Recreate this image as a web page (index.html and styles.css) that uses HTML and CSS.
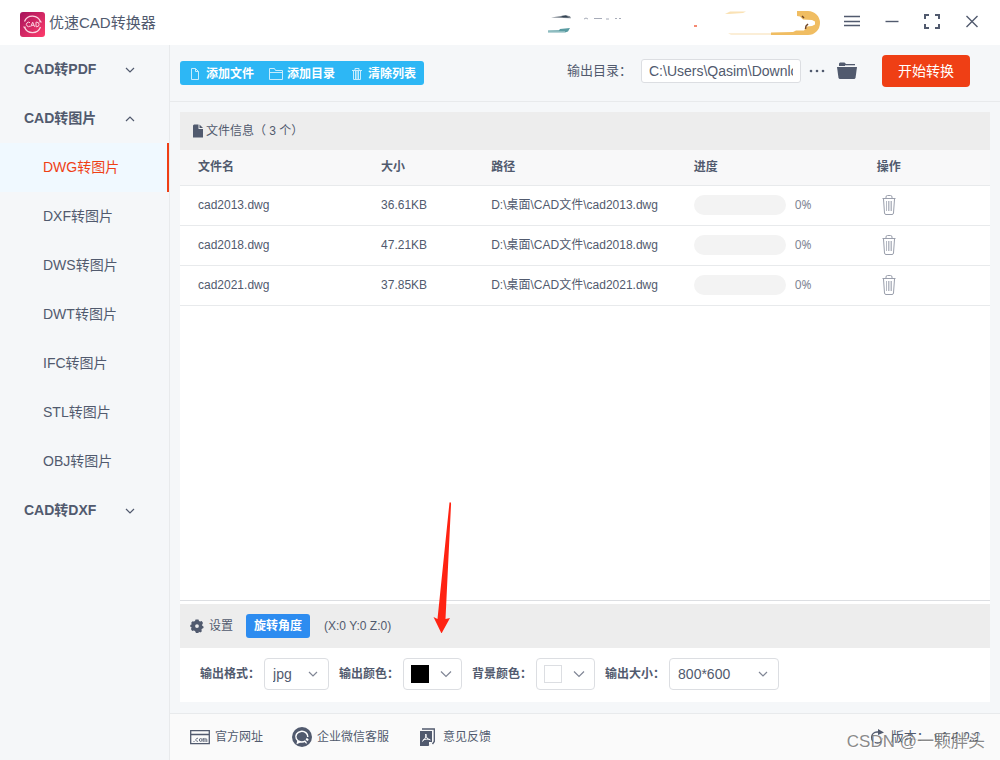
FILE: index.html
```html
<!DOCTYPE html>
<html lang="zh-CN">
<head>
<meta charset="utf-8">
<title>优速CAD转换器</title>
<link rel="stylesheet" href="styles.css">
</head>
<body>
<div class="app">
  <header class="titlebar">
    <svg class="logo" viewBox="0 0 25 25" aria-hidden="true">
      <defs><linearGradient id="lg" x1="0" y1="0" x2="1" y2="1"><stop offset="0" stop-color="#a5125c"/><stop offset="1" stop-color="#ff3d6c"/></linearGradient></defs>
      <rect width="25" height="25" rx="3" fill="url(#lg)"/>
      <path d="M4.500 9.500A8.500 8.500 0 0 1 20.500 10M20.500 15A8.500 8.500 0 0 1 4.500 15" fill="none" stroke="#fbd3e0" stroke-width="1.300"/>
      <path d="M3 14.500l3 .3-1.700 1.700zM22 10.500l-3-.3 1.700-1.700z" fill="#fbd3e0"/>
      <path d="M10 10.700a2.200 2.200 0 1 0 0 3.400M10.700 14.800l2-4.600 2 4.600M11.500 13.300h2.500M16 10.200v4.500h.8a2.200 2.200 0 0 0 0-4.500z" fill="none" stroke="#fbd3e0"/>
    </svg>
    <h1 class="title">优速CAD转换器</h1>
    <svg class="member" viewBox="0 0 280 30" aria-hidden="true">
      <path d="M11 9.500l10-1.500 5-.8 4 1 1 2-8-.3z" fill="#7d858f"/><path d="M21 8l5-.5 3 2-6-.2z" fill="#344454"/>
      <path d="M8 22.500l11-.2 1-1.300 10-.9-2 3.500-3 1H8z" fill="#5a9ca2"/><path d="M8 24h17" stroke="#c3dddf"/>
      <path d="M44 11l2-1 2 1M54 10.500h8M66 11h3M75 10.500h2M79 10.500h2" fill="none" stroke="#a6abb8"/>
      <path d="M154 17h3v2h-3z" fill="#f58a72"/>
      <path d="M185 6l5-2.500h16l-3 1.500-14 1z" fill="#fae2b5"/>
      <path d="M188 25.500h45v1h-42z" fill="#f7ddb0"/>
      <path d="M257 3h11a12 12 0 0 1 0 24h-37v-2.500l22-.5 3-1.500h8l3-4 5-.5 3-1.500v-3l-3-1.500-9-.5-3-3-3-.5z" fill="#f0bd62"/>
      <path d="M262 8l2 2M268 16l-2 2-.5 3" stroke="#704526" stroke-width="1.500" fill="none"/>
    </svg>
    <div class="window-buttons">
      <button type="button" aria-label="菜单"><svg viewBox="0 0 16 16"><path d="M0 3.500h16M0 8.500h16M0 12.500h16"/></svg></button>
      <button type="button" aria-label="最小化"><svg viewBox="0 0 16 16"><path d="M1.500 8.500h13"/></svg></button>
      <button type="button" aria-label="全屏"><svg viewBox="0 0 16 16"><path class="thick" d="M1 6V2h4M11 2h4v4M15 11v4h-4M5 15H1v-4"/></svg></button>
      <button type="button" aria-label="关闭"><svg viewBox="0 0 16 16"><path d="M2.500 3l11 11M13.500 3l-11 11"/></svg></button>
    </div>
  </header>

  <div class="body">
    <nav class="sidebar">
      <button type="button" class="group">CAD转PDF<svg viewBox="0 0 10 10"><path d="M1 3l4 4 4-4"/></svg></button>
      <button type="button" class="group" aria-expanded="true">CAD转图片<svg viewBox="0 0 10 10"><path d="M1 7l4-4 4 4"/></svg></button>
      <a href="#" class="item active">DWG转图片</a>
      <a href="#" class="item">DXF转图片</a>
      <a href="#" class="item">DWS转图片</a>
      <a href="#" class="item">DWT转图片</a>
      <a href="#" class="item">IFC转图片</a>
      <a href="#" class="item">STL转图片</a>
      <a href="#" class="item">OBJ转图片</a>
      <button type="button" class="group">CAD转DXF<svg viewBox="0 0 10 10"><path d="M1 3l4 4 4-4"/></svg></button>
    </nav>

    <main class="main">
      <div class="toolbar">
        <div class="actions">
          <button type="button"><svg viewBox="0 0 14 14"><path d="M3.500 1.500h4l3 3v8h-7zM7.500 1.500v3h3"/></svg>添加文件</button>
          <button type="button"><svg viewBox="0 0 14 14"><path d="M.5 12.500v-11h5l1 2h7v9zM.5 5.500h13"/></svg>添加目录</button>
          <button type="button"><svg viewBox="0 0 14 14"><path d="M2 3.500h10M5 3V1.500h4V3M3.500 4v8.500h7V4M5.500 4v8M7 4v8M8.500 4v8"/></svg>清除列表</button>
        </div>
        <div class="output">
          <label for="dir">输出目录：</label>
          <input id="dir" class="dir" type="text" value="C:\Users\Qasim\Downloads">
          <button type="button" class="icon-button" aria-label="选择目录"><svg class="dots" viewBox="0 0 16 16"><circle cx="2" cy="8" r="1.300"/><circle cx="8" cy="8" r="1.300"/><circle cx="14" cy="8" r="1.300"/></svg></button>
          <button type="button" class="icon-button" aria-label="打开目录"><svg class="folder" viewBox="0 0 20 18"><path d="M2 4V1.500l1-1h4.500L9 2h9v2z"/><path class="gap" d="M8 3.500h10"/><path d="M0 5h20l-1.500 11-1 1h-15l-1-1z"/></svg></button>
          <button type="button" class="start">开始转换</button>
        </div>
      </div>

      <div class="content">
        <section class="files">
          <h2 class="bar file-bar"><svg viewBox="0 0 10 14"><path d="M0 1.500L1 .5h4.500V5H10v8.500H0z"/><path d="M6.500.5L10 4H6.500z"/></svg><span>文件信息（ 3 个）</span></h2>
          <table>
            <colgroup><col class="c-name"><col class="c-size"><col class="c-path"><col class="c-progress"><col></colgroup>
            <thead><tr><th>文件名</th><th>大小</th><th>路径</th><th>进度</th><th>操作</th></tr></thead>
            <tbody>
              <tr><td>cad2013.dwg</td><td>36.61KB</td><td>D:\桌面\CAD文件\cad2013.dwg</td><td><div class="progress"><span class="track"></span><span>0%</span></div></td><td><button type="button" class="trash" aria-label="删除"><svg viewBox="0 0 14 20"><use href="#bin"/></svg></button></td></tr>
              <tr><td>cad2018.dwg</td><td>47.21KB</td><td>D:\桌面\CAD文件\cad2018.dwg</td><td><div class="progress"><span class="track"></span><span>0%</span></div></td><td><button type="button" class="trash" aria-label="删除"><svg viewBox="0 0 14 20"><use href="#bin"/></svg></button></td></tr>
              <tr><td>cad2021.dwg</td><td>37.85KB</td><td>D:\桌面\CAD文件\cad2021.dwg</td><td><div class="progress"><span class="track"></span><span>0%</span></div></td><td><button type="button" class="trash" aria-label="删除"><svg viewBox="0 0 14 20"><use href="#bin"/></svg></button></td></tr>
            </tbody>
          </table>
        </section>

        <section class="settings">
          <div class="bar settings-bar">
            <svg class="gear" viewBox="0 0 14 14"><path fill-rule="evenodd" d="M5.500 0.500h3l.5 1.500 1.200.6 1.500-.5 1.300 2-.8 1.400v1.200l1.300.8v1.500l-1.500.7-.6 1.100.5 1.400-1.600 1.300-1.500-.7-.3 1.200h-2.500L5 12l-1.300-.6-1.500.5L.9 10l.8-1.400L.3 7.800V6l1.400-.7-.5-1.500L2.500 2.200l1.400.4L5 2zM7 5.200a1.900 1.900 0 1 0 0 3.800 1.900 1.900 0 0 0 0-3.800z"/></svg>
            <span>设置</span>
            <button type="button" class="rotate">旋转角度</button>
            <span class="angles">(X:0 Y:0 Z:0)</span>
          </div>
          <form class="options">
            <label for="format">输出格式：</label>
            <span class="select format"><select id="format"><option>jpg</option></select><svg viewBox="0 0 10 10"><path d="M1 3l4 4 4-4"/></svg></span>
            <label for="color">输出颜色：</label>
            <button type="button" id="color" class="select picker"><span class="swatch black"></span><svg viewBox="0 0 12 10"><path d="M1 2.500l5 5 5-5"/></svg></button>
            <label for="bg">背景颜色：</label>
            <button type="button" id="bg" class="select picker"><span class="swatch"></span><svg viewBox="0 0 12 10"><path d="M1 2.500l5 5 5-5"/></svg></button>
            <label for="size">输出大小：</label>
            <span class="select size"><select id="size"><option>800*600</option></select><svg viewBox="0 0 10 10"><path d="M1 3l4 4 4-4"/></svg></span>
          </form>
        </section>
      </div>

      <footer class="footer">
        <a href="#"><svg class="f-icon" viewBox="0 0 20 20"><path class="line" d="M.7 3.700h18.600v13H.7zM1 7.500h18"/><path class="thin" d="M3.500 14.500h1M8 11.500a1.500 1.500 0 1 0 0 2.700M9.300 13a1.400 1.400 0 1 0 2.800 0 1.400 1.400 0 1 0-2.800 0M13.200 15v-4M13.200 12.300q1-1.500 1.800 0V15M15 12.300q1-1.500 1.800 0V15"/></svg>官方网址</a>
        <a href="#"><svg class="f-icon" viewBox="0 0 20 20"><circle cx="10" cy="10" r="10"/><path class="white" d="M13.500 13.800A6 5.300 0 1 1 15.800 10M6 13.500L5.500 16l2.700-1.200"/><path class="dot" d="M14.800 10.800l2 2-1.200 1.200-2-1.200zM13 14l1.200.5 1 2.300-2-.7z"/></svg>企业微信客服</a>
        <a href="#"><svg class="f-icon" viewBox="0 0 20 20"><path d="M2 4h12v10.500L10.500 19H2z"/><path class="line" d="M4 2h12.300v12.500L14.500 17"/><path class="white fine" d="M4 14.500c3-2 4.500-5 3.800-7.500M7.800 7c0 3.500 1.500 5 4.700 6M5 13c2.500-1 5-1 7-.5"/><path class="dot" d="M11 15h3l-3 3.500z"/></svg>意见反馈</a>
        <span class="version"><svg viewBox="0 0 16 16"><path class="line" d="M11 3H8a5.500 5.500 0 1 0 5.500 6.500"/><path d="M9 0l6 3.500L9 6z"/></svg><span>版本：</span><em>v1.4.0.2</em></span>
      </footer>
    </main>
  </div>

  <svg class="arrow" viewBox="0 0 20 132" aria-hidden="true"><path d="M17.500 1.500Q19.500.5 19 4L13.500 118l4.500-1-8.500 15.500L1.500 116l4 2z"/></svg>
  <div class="watermark">CSDN @一颗胖头</div>
</div>
<svg class="defs" aria-hidden="true"><symbol id="bin" viewBox="0 0 14 20"><path d="M.5 3.500h13M4 3.500V2q0-1.500 1.500-1.500h3Q10 .5 10 2v1.500M1.500 4l1 14q.1 1.500 1.500 1.500h6q1.400 0 1.500-1.500l1-14"/><path class="ribs" d="M4.500 6v10M6.500 6v10M8 6v10M9.500 6v10"/></symbol></svg>
</body>
</html>
```

FILE: styles.css
```css
* { box-sizing: border-box; }
body {
  margin: 0;
  color: #515a6e;
  background: #f5f7f9;
  font: 12px/20px "Liberation Sans", "Noto Sans CJK SC", sans-serif;
}
button, input, select { font: inherit; color: inherit; }
button { padding: 0; border: 0; background: none; }
a { color: inherit; text-decoration: none; }
svg { display: block; flex: none; fill: #515a6e; }
.defs { position: absolute; width: 0; height: 0; }
.app { position: relative; display: flex; flex-direction: column; min-height: 100vh; }

.titlebar { display: flex; align-items: center; height: 45px; padding: 0 20px; background: #fff; }
.logo { width: 25px; height: 25px; margin-top: 3px; }
.title { margin: 0 0 0 4px; font-size: 15px; font-weight: 400; }
.member { width: 280px; height: 30px; margin-left: auto; }
.window-buttons { display: flex; gap: 24px; margin-left: 24px; padding-bottom: 4px; }
.window-buttons svg { width: 16px; height: 16px; fill: none; stroke: #515a6e; stroke-width: 1.4; }
.window-buttons .thick { stroke-width: 2; }

.body { display: flex; flex: 1; }
.sidebar { width: 170px; flex: none; border-right: 1px solid #e8eaec; font-size: 14px; }
.group { display: flex; align-items: center; justify-content: space-between; width: 100%; height: 49px; padding: 0 34px 2px 24px; font-weight: 700; }
.group svg { width: 10px; height: 10px; margin-top: 2px; fill: none; stroke: #515a6e; stroke-width: 1.2; }
.item { display: flex; align-items: center; height: 49px; padding: 0 0 2px 43px; }
.item.active { color: #ef3f15; background: #f0f9ff; border-right: 2px solid #ef3f15; }

.main { display: flex; flex-direction: column; flex: 1; min-width: 0; }
.toolbar { display: flex; align-items: center; justify-content: space-between; height: 57px; padding: 0 30px 4px 10px; border-bottom: 1px solid #e8eaec; }
.actions { display: flex; gap: 15px; height: 24px; padding: 0 8px; margin-top: 4px; border-radius: 3px; background: #2db7f5; }
.actions button { display: flex; align-items: center; gap: 4px; padding-top: 1px; color: #fff; font-weight: 700; }
.actions svg { width: 14px; height: 14px; fill: none; stroke: #c7ecfd; }
.output { display: flex; align-items: center; font-size: 13px; }
.output label { font-size: 13px; margin-right: 9px; }
.dir { width: 160px; height: 24px; padding: 0 7px; border: 1px solid #dcdee2; border-radius: 3px; background: #fff; font-size: 14px; }
.icon-button { margin-left: 8px; }
.dots { width: 16px; height: 16px; }
.icon-button + .icon-button { margin-left: 12px; }
.folder { width: 20px; height: 18px; }
.folder .gap { stroke: #c5c9d1; }
.start { width: 88px; height: 32px; margin-left: 25px; border-radius: 4px; background: #ef3f15; color: #fff; font-size: 14px; }

.content { display: flex; flex: 1; flex-direction: column; gap: 3px; margin: 10px 10px 11px; background: #fff; }
.files { flex: 1; border-bottom: 1px solid #dcdee2; }
.bar { display: flex; align-items: center; margin: 0; background: #ededed; font-size: 12px; font-weight: 400; }
.file-bar { height: 38px; gap: 3px; padding: 0 13px; }
.file-bar svg { width: 10px; height: 14px; }
table { width: 100%; border-collapse: collapse; table-layout: fixed; }
.c-name { width: 22.6%; }
.c-size { width: 13.6%; }
.c-path { width: 25%; }
.c-progress { width: 22.6%; }
th, td { padding: 0 0 0 18px; text-align: left; border-bottom: 1px solid #e8eaec; white-space: nowrap; }
th { height: 35px; background: #f8f8f9; }
td { height: 40px; }
.progress { display: flex; align-items: center; gap: 9px; color: #808695; font-family: "Noto Sans", sans-serif; }
.track { width: 92px; height: 20px; border-radius: 10px; background: #f3f3f3; }
.trash { display: block; padding-left: 5px; }
.trash svg { width: 14px; height: 20px; fill: none; stroke: #9a9fac; stroke-width: 1; }
.ribs { stroke: #b4b8c2; }

.settings-bar { height: 44px; padding: 0 10px; }
.gear { width: 14px; height: 14px; margin-right: 5px; }
.rotate { width: 64px; height: 24px; margin: 0 14px 0 13px; border-radius: 3px; background: #2d8cf0; color: #fff; font-weight: 700; }
.options { display: flex; align-items: center; padding: 10px 20px 12px; }
.options label { font-weight: 700; }
.select { position: relative; display: flex; align-items: center; height: 32px; margin: 0 10px 0 4px; border: 1px solid #dcdee2; border-radius: 4px; background: #fff; font-size: 14px; }
.select select { width: 100%; height: 30px; padding: 0 8px; border: 0; background: none; appearance: none; }
.select svg { width: 10px; height: 10px; fill: none; stroke: #808695; stroke-width: 1.2; }
.select select + svg { position: absolute; right: 10px; pointer-events: none; }
.format { width: 65px; }
.size { width: 110px; }
.picker { width: 59px; justify-content: space-between; padding: 0 9px 0 7px; }
.picker svg { width: 12px; }
.swatch { width: 18px; height: 18px; border: 1px solid #dcdee2; }
.swatch.black { background: #000; border-color: #000; }

.footer { display: flex; align-items: center; gap: 29px; height: 47px; padding: 0 20px; border-top: 1px solid #e8eaec; background: #fafafa; }
.footer a { display: flex; align-items: center; gap: 5px; }
.f-icon { width: 20px; height: 20px; }
.line, .thin { fill: none; stroke: #515a6e; stroke-width: 1.3; }
.thin { stroke-width: .9; }
.white { fill: none; stroke: #fff; stroke-width: 1.5; }
.fine { stroke-width: 1; }
.dot { fill: #fff; }
.version { display: flex; align-items: center; gap: 6px; margin-left: auto; font-size: 13px; }
.version svg { width: 16px; height: 16px; }
.version em { margin-left: -2px; }
.arrow { position: absolute; left: 432px; bottom: 127px; width: 20px; height: 132px; fill: #ff2312; }
.watermark { position: absolute; right: 15px; bottom: 6px; color: rgba(100, 100, 100, .75); font-size: 17px; line-height: 24px; text-shadow: 1px 1px 0 #fff; pointer-events: none; }
```
